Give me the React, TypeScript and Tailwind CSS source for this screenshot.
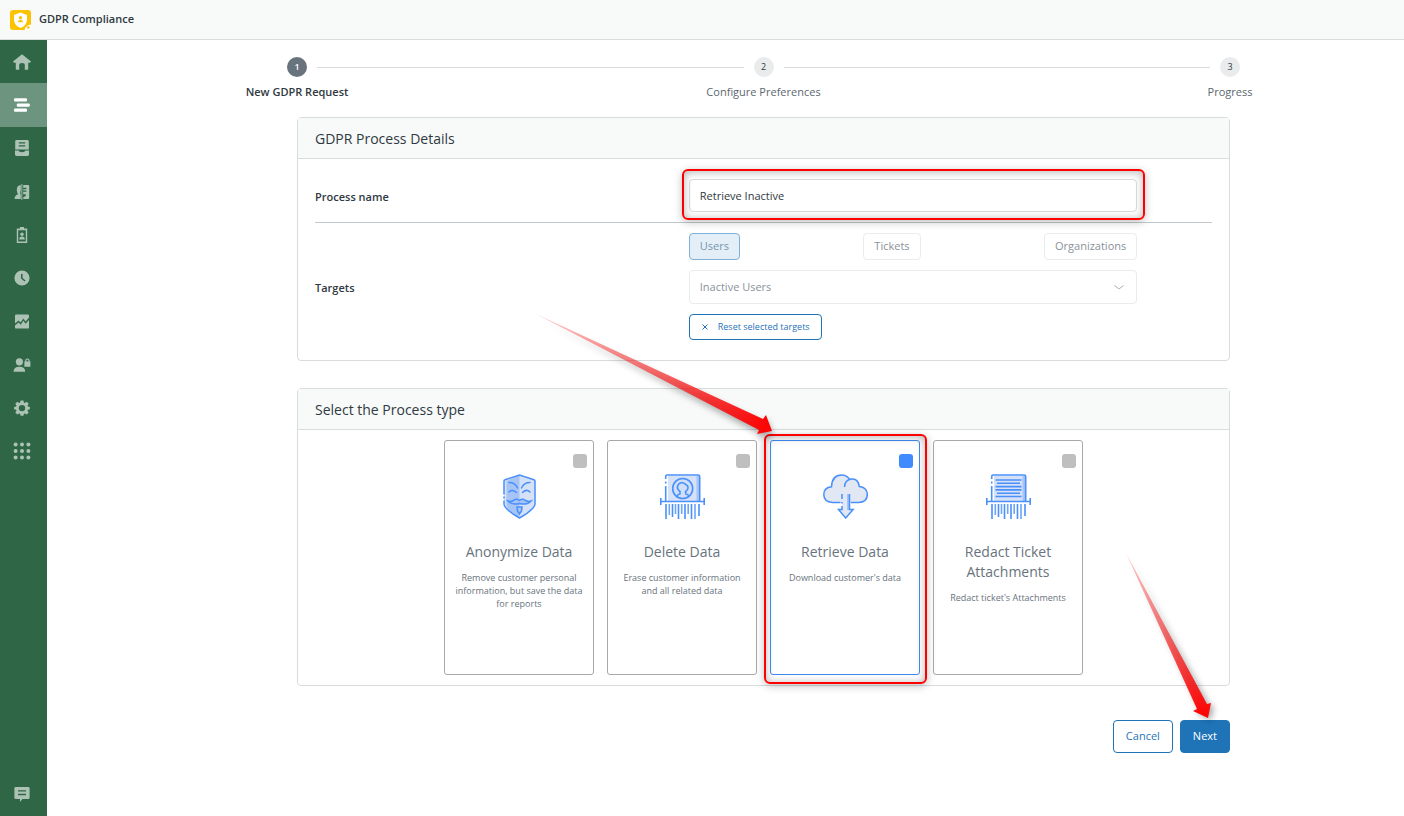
import { Fragment, useState } from 'react'
import type { ReactNode } from 'react'
import clsx from 'clsx'

const navItems: { name: string; icon: ReactNode }[] = [
  {
    name: 'Home',
    icon: <path d="M10 2.2 19 9.4l-1 1.4h-1.8V17q0 .8-.8.8h-2.6V13q0-2-2.8-2t-2.8 2v4.8H4.6q-.8 0-.8-.8v-6.2H2L1 9.4Z" />,
  },
  {
    name: 'Processes',
    icon: (
      <>
        <rect x="2" y="3.2" width="13" height="3.4" rx="1" />
        <rect x="4.8" y="8.4" width="13" height="3.4" rx="1" />
        <rect x="2" y="13.4" width="13" height="3.4" rx="1" />
      </>
    ),
  },
  {
    name: 'Archive',
    icon: (
      <path
        fillRule="evenodd"
        d="M4.6 2h10.8q1.4 0 1.4 1.4v8H3.2v-8Q3.2 2 4.6 2Zm2.2 2.2v1.400h6.400V4.200Zm0 3v1.400h6.400V7.200ZM3 12.600h3.400q.6 1.600 3.600 1.600t3.600-1.600H17v4q0 1.400-1.400 1.400H4.400Q3 18 3 16.600Z"
      />
    ),
  },
  {
    name: 'Anonymization',
    icon: (
      <>
        <path d="M8.800 3v5l-.6 3.400.6 1V17H2.600q0-3.800 3.400-4.800Q4.800 11 4.800 7.600 5 3.400 8.800 3Z" />
        <rect x="9.400" y="2" width=".9" height="16" />
        <path
          fillRule="evenodd"
          d="M11.200 3h4.800q1.200 0 1.200 1.200v11.600q0 1.200-1.200 1.200h-4.800v-1.600l2.600-1.600v-1.600h-2.600v-2.400h3.200V8.600h-3.200V7.200h3.200V5.800h-3.200Z"
        />
      </>
    ),
  },
  {
    name: 'Requests',
    icon: (
      <>
        <path fillRule="evenodd" d="M8 2h4v1.600h3.200V18H4.800V3.600H8Zm-1.800 3.200v11.200h7.600V5.200Z" />
        <circle cx="10" cy="9.200" r="1.700" />
        <path d="M7.200 14.400q0-3 2.800-3t2.800 3Z" />
      </>
    ),
  },
  {
    name: 'Schedule',
    icon: <path fillRule="evenodd" d="M10 2.400a7.600 7.600 0 1 1 0 15.200 7.600 7.600 0 0 1 0-15.200ZM9 6v4.600l3.600 3 1-1.200-3-2.400V6Z" />,
  },
  {
    name: 'Analytics',
    icon: (
      <>
        <path d="M4.200 3.600h11.600q1.200 0 1.200 1.200v1.800l-3.400 4-2.200-3-2.800 4-2-2-3.600 3V4.800q0-1.200 1.200-1.200Z" />
        <path d="m3 14.600 3.600-3 2.200 2.200 2.600-4 2.200 3L17 9v7.400q0 1.200-1.200 1.200H4.200q-1.200 0-1.200-1.200Z" />
      </>
    ),
  },
  {
    name: 'Permissions',
    icon: (
      <>
        <circle cx="7.400" cy="6.800" r="3.600" />
        <path d="M1.600 16.800q0-5 5.800-5t5.800 5Z" />
        <path fillRule="evenodd" d="M13.200 6.400V5.600a2.200 2.200 0 0 1 4.400 0v.8h.8v5.400h-6V6.400Zm1.200 0h2v-.8a1 1 0 0 0-2 0Z" />
      </>
    ),
  },
  {
    name: 'Settings',
    icon: (
      <path
        fillRule="evenodd"
        d="M8.600 2.400h2.800l.5 2.100 1 .4 1.800-1.100 2 2-1.200 1.800.4 1 2 .5v2.200l-2 .5-.4 1 1.200 1.800-2 2-1.800-1.200-1 .4-.5 2H8.600l-.5-2-1-.4-1.800 1.200-2-2 1.200-1.800-.4-1-2-.5V9.100l2-.5.4-1-1.200-1.800 2-2 1.800 1.100 1-.4ZM10 6.900a3.200 3.200 0 1 0 0 6.400 3.200 3.200 0 0 0 0-6.400Z"
      />
    ),
  },
  {
    name: 'Apps',
    icon: [3.6, 10, 16.4].map((y) => [3.6, 10, 16.4].map((x) => <circle key={`${x}-${y}`} cx={x} cy={y} r="2" />)),
  },
]

const steps = ['New GDPR Request', 'Configure Preferences', 'Progress']

const targets = ['Users', 'Tickets', 'Organizations']

const MaskIcon = () => (
  <svg viewBox="0 0 45 45" className="size-[45px]" fill="none" stroke="#4a90fb" strokeWidth="1.500" strokeLinecap="round">
    <path d="M22.500 1 38 6v25q-1.500 4-12 11.500l-3.500 1.500-3.500-1.500Q8.500 35 7 31V6Z" fill="#d5e1f6" stroke="none" />
    <path d="M22.500 1v43l-3.500-1.500Q11 37 9.500 31V7Z" fill="#a6c5f6" stroke="none" />
    <path d="M7 20V7q0-1 1-1.300L22.500 1 37 5.700q1 .3 1 1.300v23q0 2-2 4-5 5.500-13.500 10Q14 39.500 9 34q-2-2-2-4v-3M7 23v1" />
    <path d="M12 8.500q6 0 8.500 5.500M33 8.500q-6 0-8.500 5.500M12 18q3.500-3.500 7.500.5M33 18q-3.500-3.500-7.500.5" />
    <path d="M11 27q3 1 5.500-.5 3-2.500 6 0 3-2.500 6 0 2.500 1.500 5.500.5-4 4.500-11.500 2.500Q15 31.500 11 27Z" fill="#a6c5f6" />
    <path d="M20 33h5l-.5 4-2 3-2-3Z" fill="#a6c5f6" />
  </svg>
)

const Shredder = ({ children }: { children: ReactNode }) => (
  <svg viewBox="0 0 45 45" className="size-[45px]" fill="none" stroke="#4a90fb" strokeWidth="1.600">
    <path d="M8 2h31v25H8Z" fill="#d5e1f6" stroke="none" />
    <path d="M36.500 2h3v25h-3Z" fill="#a6c5f6" stroke="none" />
    <path d="M5.700 5V2.500Q5.700 1 7.200 1h31Q39.700 1 39.700 2.500V27M5.700 12v15M5.700 7.500v2M.800 24v7M44.200 24v7M1 27.500h43" />
    <path d="M6 30v15M12.500 30v13M18.500 30v15M25 30v15M31.500 30v15M39 30v12" />
    <path d="M9.300 30v11M15.500 30v10M21.700 30v10M28.200 30v10M35 30v15" stroke="#6ca5fb" />
    {children}
  </svg>
)

const DeleteIcon = () => (
  <Shredder>
    <circle cx="22.700" cy="14.500" r="10" fill="#cfdff8" />
    <path d="M17 22.500q.5-2 3-2.700v-2.300q-3-2-2.500-5 1-4 5.200-3.700 2 .2 3 1.700 2.500 1 2.300 3.500-.2 2-2.300 3.500v2.300q2.700.7 3.300 2.700" />
  </Shredder>
)

const RedactIcon = () => (
  <Shredder>
    <path d="M9.500 6h26M11 9.300h23M9.500 12.600h26M9.500 15.900h26M11 19.200h23M9.500 22.500h26" />
  </Shredder>
)

const CloudIcon = () => (
  <svg viewBox="0 0 45 45" className="size-[45px]" fill="none" stroke="#4a90fb" strokeWidth="1.500">
    <path
      d="M17.500 28.500H9.500Q.8 28 .8 20.500.8 13.500 8.500 12.700 9 1 18.700 1q5 0 7.800 4.300Q35 3.500 36.300 12.500q8 1 8 8 0 7.500-8.500 8h-8"
      fill="#e1e7f3"
    />
    <path d="M21.500 13q.3-6.500 6-7.700" />
    <path d="M19 20h7.500v15.500h4L22.700 44.500l-7.600-9H19Z" fill="#e1e7f3" stroke="none" />
    <path d="M24 20h3v16h-3Z" fill="#a6c5f6" stroke="none" />
    <path d="M19 20v5M19 28v1.500M19 32v3.500h-3.500l7.200 8.500 7.400-8.500h-3.600V20" />
  </svg>
)

const processTypes = [
  {
    id: 'anonymize',
    title: 'Anonymize Data',
    description: 'Remove customer personal information, but save the data for reports',
    icon: <MaskIcon />,
  },
  {
    id: 'delete',
    title: 'Delete Data',
    description: 'Erase customer information and all related data',
    icon: <DeleteIcon />,
  },
  {
    id: 'retrieve',
    title: 'Retrieve Data',
    description: "Download customer's data",
    icon: <CloudIcon />,
  },
  {
    id: 'redact',
    title: 'Redact Ticket Attachments',
    description: "Redact ticket's Attachments",
    icon: <RedactIcon />,
  },
]

const Highlight = ({ className }: { className: string }) => (
  <span
    className={clsx(
      'pointer-events-none absolute -right-2 -left-[7px] z-10 rounded-md border-2 border-[#ff0000] shadow-[0_2px_8px_rgba(0,0,0,0.25),inset_0_1px_8px_rgba(0,0,0,0.3)]',
      className,
    )}
  />
)

const Sidebar = () => (
  <nav className="flex w-[47px] shrink-0 flex-col justify-between bg-[#2f6746] text-[#acc2b5]">
    <ul className="grid h-[433px] grid-rows-10">
      {navItems.map((item, index) => (
        <li key={item.name} className="grid">
          <a
            href="#"
            aria-label={item.name}
            className={clsx('flex items-center justify-center pr-[3px]', index === 1 && 'bg-[#6d947e] text-white')}
          >
            <svg viewBox="0 0 20 20" className="size-5" fill="currentColor">
              {item.icon}
            </svg>
          </a>
        </li>
      ))}
    </ul>
    <a href="#" aria-label="Feedback" className="flex h-11 items-center justify-center pr-[3px]">
      <svg viewBox="0 0 20 20" className="size-5" fill="currentColor">
        <path
          fillRule="evenodd"
          d="M3.600 3h12.800q1.200 0 1.200 1.200v9.600q0 1.200-1.200 1.200h-6L8 18v-3H3.600q-1.200 0-1.200-1.200V4.200Q2.400 3 3.600 3ZM6 6.200v1.400h8V6.200ZM6 9.800v1.400h8V9.800Z"
        />
      </svg>
    </a>
  </nav>
)

const Stepper = () => (
  <ol className="-mx-[60px] flex">
    {steps.map((step, index) => (
      <Fragment key={step}>
        {index > 0 && <li aria-hidden="true" className="-mx-10 mt-[10px] h-px flex-1 bg-[#d8dcde]" />}
        <li className="flex w-[120px] flex-col items-center gap-[5px]">
          <span
            className={clsx(
              'flex size-5 items-center justify-center rounded-full text-[9px]',
              index === 0 ? 'bg-[#68737d] font-semibold text-white' : 'bg-[#e9ebed] text-[#2f3941]',
            )}
          >
            {index + 1}
          </span>
          <span className={clsx('leading-5 whitespace-nowrap', index === 0 ? 'font-semibold' : 'text-[#5c6770]')}>
            {step}
          </span>
        </li>
      </Fragment>
    ))}
  </ol>
)

const SectionTitle = ({ children }: { children: ReactNode }) => (
  <h2 className="border-b border-[#d8dcde] bg-[#f8f9f9] px-[17px] pt-[11px] pb-[9px] text-[14px] leading-5">{children}</h2>
)

const ProcessDetails = () => {
  const [name, setName] = useState('Retrieve Inactive')

  return (
    <section className="mt-[15px] rounded-sm border border-[#d8dcde]">
      <SectionTitle>GDPR Process Details</SectionTitle>
      <div className="px-[17px] pt-5 pb-5">
        <div className="grid grid-cols-12 items-center border-b border-[#c2c8cc] pb-[10px]">
          <label htmlFor="process-name" className="col-span-5 pt-1 font-semibold">
            Process name
          </label>
          <div className="relative col-span-6">
            <input
              id="process-name"
              type="text"
              value={name}
              onChange={(e) => setName(e.target.value)}
              className="block h-[33px] w-full rounded border border-[#d8dcde] px-[10px] outline-none"
            />
            <Highlight className="-top-[10px] -bottom-2" />
          </div>
        </div>
        <div className="grid grid-cols-12 items-center pt-[10px]">
          <label htmlFor="targets" className="col-span-5 pt-1 font-semibold">
            Targets
          </label>
          <div className="col-span-6 flex flex-col gap-[10px]">
            <div className="flex justify-between">
              {targets.map((target) => (
                <button
                  key={target}
                  type="button"
                  disabled
                  className={clsx(
                    'h-[27px] rounded border px-[10px]',
                    target === 'Users' ? 'border-[#7fb0d8] bg-[#e3eef7] text-[#7696b0]' : 'border-[#e9ebed] text-[#8a9299]',
                  )}
                >
                  {target}
                </button>
              ))}
            </div>
            <div className="relative">
              <select
                id="targets"
                disabled
                className="block h-[34px] w-full appearance-none rounded border border-[#e9ebed] px-[10px] text-[#8a9299] opacity-100"
              >
                <option>Inactive Users</option>
              </select>
              <svg
                viewBox="0 0 12 12"
                className="pointer-events-none absolute top-[11px] right-3 size-3"
                fill="none"
                stroke="#a3aab0"
              >
                <path d="m1.500 4.500 3.900 3q.6.400 1.200 0l3.900-3" />
              </svg>
            </div>
            <button
              type="button"
              className="flex h-[26px] items-center gap-[9px] self-start rounded border border-[#1f73b7] px-[11px] text-[9px] text-[#1f73b7]"
            >
              <svg viewBox="0 0 8 8" className="size-2" fill="none" stroke="currentColor">
                <path d="m1.500 1.500 5 5m0-5-5 5" />
              </svg>
              Reset selected targets
            </button>
          </div>
        </div>
      </div>
    </section>
  )
}

const ProcessType = () => {
  const [selected, setSelected] = useState('retrieve')

  return (
    <section className="mt-[27px] rounded-sm border border-[#d8dcde]">
      <SectionTitle>Select the Process type</SectionTitle>
      <div className="flex justify-center gap-[13px] py-[10px]">
        {processTypes.map((type) => (
          <label
            key={type.id}
            className={clsx(
              'relative flex h-[235px] w-[150px] flex-col items-center rounded-[3px] border px-2 pt-[33px] text-center text-[#68737d]',
              selected === type.id ? 'border-[#3f8bf5]' : 'border-[#a8a8a8]',
            )}
          >
            <input
              type="checkbox"
              checked={selected === type.id}
              onChange={() => setSelected(type.id)}
              className="absolute top-[13px] right-[6px] size-[14px] appearance-none rounded-[3px] bg-[#bfbfbf] checked:bg-[#408cff]"
            />
            {type.icon}
            <span className="mt-[23px] text-[14px] leading-5">{type.title}</span>
            <span className="mt-[9px] text-[9px] leading-[13px]">{type.description}</span>
            {type.id === 'retrieve' && (
              <>
                <Highlight className="-top-[7px] -bottom-[10px]" />
                <svg
                  viewBox="0 0 250 140"
                  className="pointer-events-none absolute -top-[131px] -left-[242px] z-20 h-[140px] w-[250px] max-w-none drop-shadow-[1px_4px_3px_rgba(0,0,0,0.35)]"
                >
                  <defs>
                    <linearGradient id="arrow-type">
                      <stop offset="0" stopColor="#ff0000" stopOpacity="0.2" />
                      <stop offset=".35" stopColor="#f21a1a" stopOpacity="0.5" />
                      <stop offset="1" stopColor="#ff0000" />
                    </linearGradient>
                  </defs>
                  <path d="M7 4 234 109l3-4 6 16-15 3 2-4Z" fill="url(#arrow-type)" />
                </svg>
              </>
            )}
          </label>
        ))}
      </div>
    </section>
  )
}

const App = () => {
  return (
    <div className="flex min-h-screen flex-col bg-white font-['Open_Sans','Noto_Sans',sans-serif] text-[11px] text-[#2f3941]">
      <header className="flex h-10 items-center gap-2 border-b border-[#d8dcde] bg-[#f8f9f9] px-[10px]">
        <svg viewBox="0 0 21 20" className="h-5 w-[21px]">
          <rect width="21" height="20" rx="3" fill="#fdc300" />
          <path d="M10.500 2.500 17 5v5q0 5-6.500 8Q4 15 4 10V5Z" fill="#fff" />
          <circle cx="10.500" cy="7.800" r="1.700" fill="#fdc300" />
          <path d="M7.800 12.200q.4-2 2.700-2.400 2.300.4 2.700 2.400Z" fill="#fdc300" />
          <path d="M14.500 20q.5-4.500 6.500-5.500V20Z" fill="#fff" />
          <circle cx="18.300" cy="17.500" r="1.300" fill="#fdc300" />
        </svg>
        <h1 className="font-semibold">GDPR Compliance</h1>
      </header>
      <div className="flex flex-1">
        <Sidebar />
        <main className="flex-1 pt-[17px] pr-[174px] pb-8 pl-[250px]">
          <Stepper />
          <ProcessDetails />
          <ProcessType />
          <div className="mt-[34px] flex justify-end gap-[7px]">
            <button type="button" className="h-[33px] rounded border border-[#1f73b7] px-3 text-[#1f73b7]">
              Cancel
            </button>
            <button type="button" className="relative h-[33px] rounded border border-[#1f73b7] bg-[#1f73b7] px-3 text-white">
              Next
              <svg
                viewBox="0 0 100 180"
                className="pointer-events-none absolute -top-[171px] -left-[62px] z-20 h-[180px] w-[100px] max-w-none drop-shadow-[3px_2px_3px_rgba(0,0,0,0.35)]"
              >
                <defs>
                  <linearGradient id="arrow-next" x1="0" y1="0" x2="0" y2="1">
                    <stop offset="0" stopColor="#ff0000" stopOpacity="0.2" />
                    <stop offset=".35" stopColor="#f21a1a" stopOpacity="0.5" />
                    <stop offset="1" stopColor="#ff0000" />
                  </linearGradient>
                </defs>
                <path d="m7 3 81 151 4-1-3 15-15-7 4-2Z" fill="url(#arrow-next)" />
              </svg>
            </button>
          </div>
        </main>
      </div>
    </div>
  )
}

export default App
